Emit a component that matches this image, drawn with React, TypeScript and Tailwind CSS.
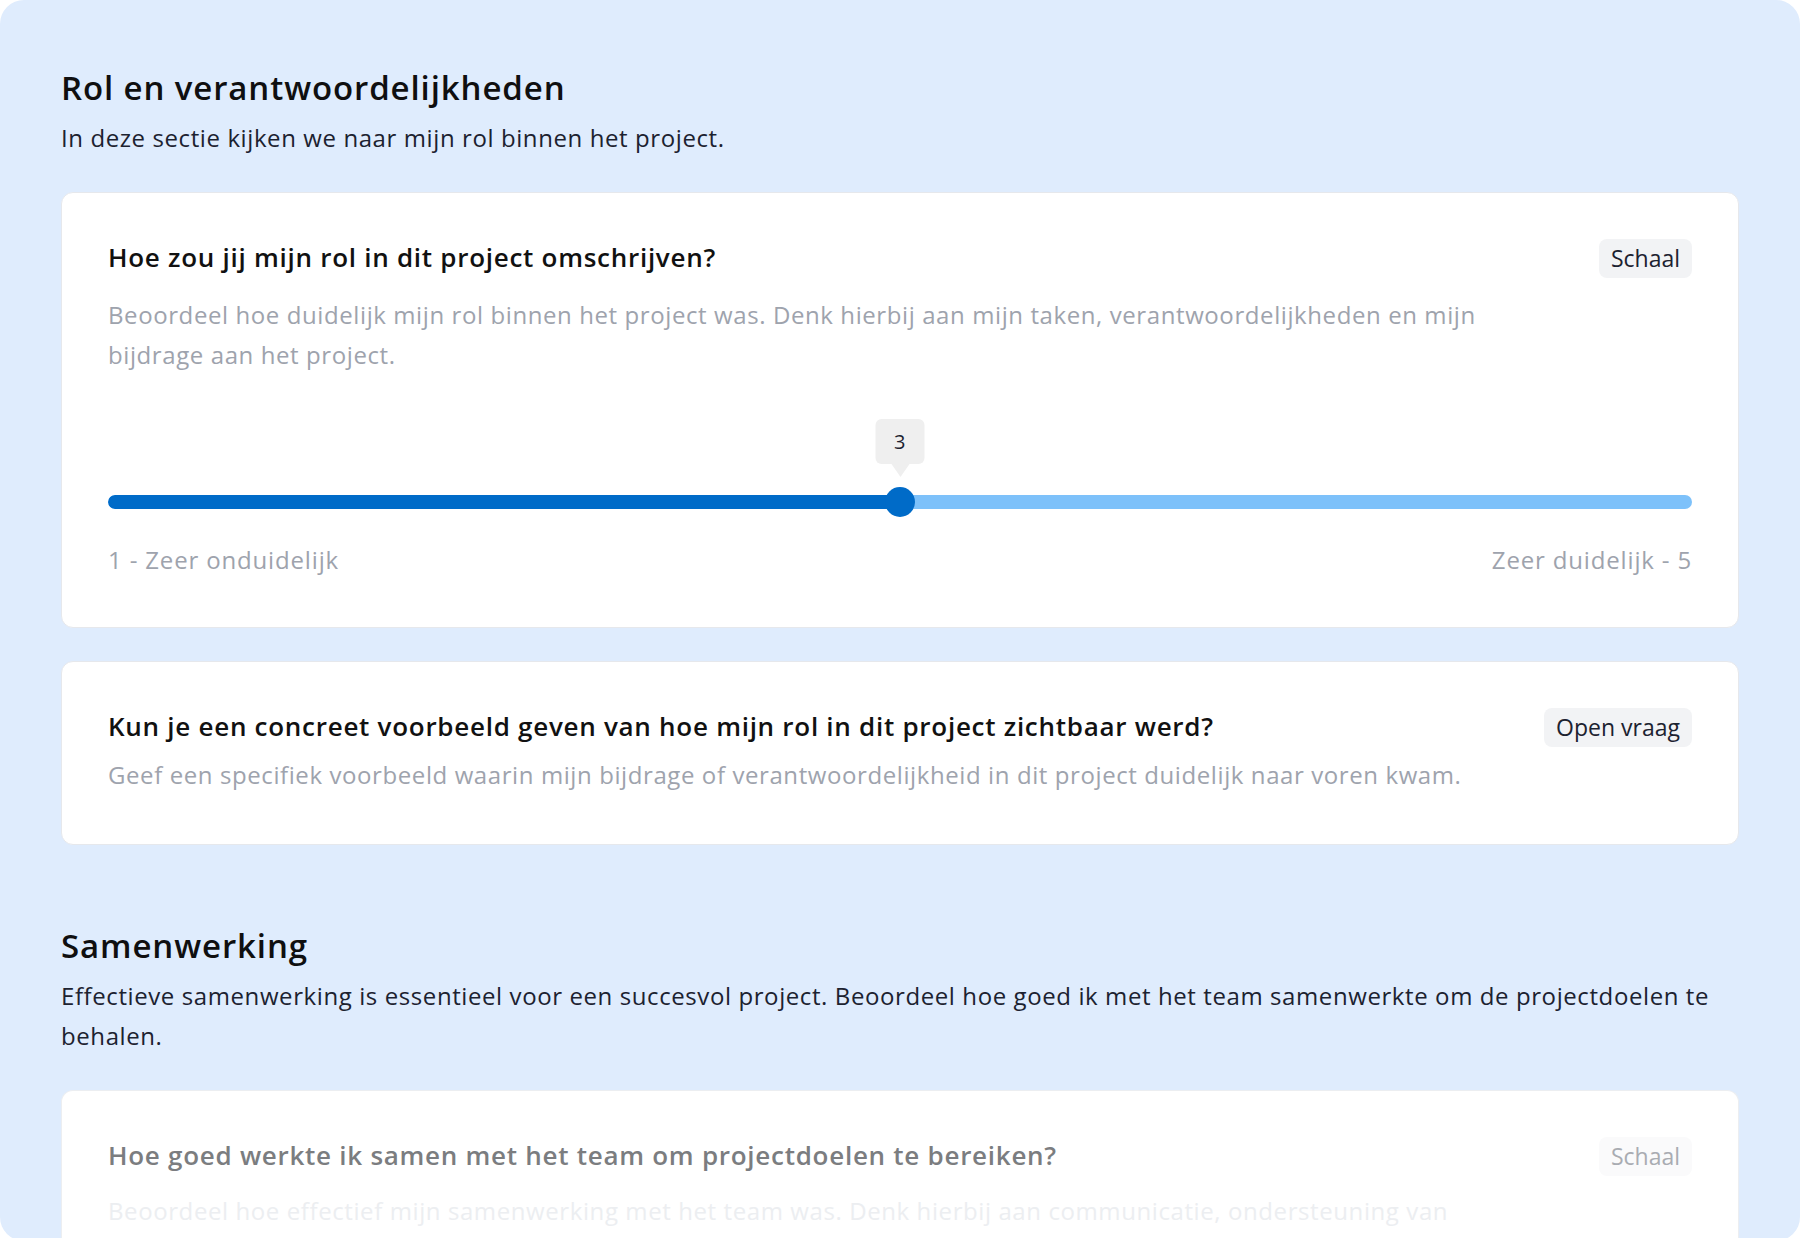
import React from "react";

type Question = {
	title: string;
	description: string;
	type: string;
};

const Badge: React.FC<{ label: string; faded?: boolean }> = ({ label, faded }) => (
	<span
		className={`shrink-0 h-[39px] px-3 flex items-center rounded-lg text-[23px] tracking-normal ${faded ? "bg-[#fafafb] text-[#a9acb2]" : "bg-[#f2f3f5] text-[#1c2230]"}`}
	>
		{label}
	</span>
);

const ScaleSlider: React.FC<{ value: number; min: number; max: number }> = ({
	value,
	min,
	max,
}) => {
	const pct = ((value - min) / (max - min)) * 100;
	return (
		<div className="relative mt-[44px] pt-[76px]">
			<div className="h-[14px] w-full rounded-full bg-[#7dc1fa] overflow-hidden">
				<div className="h-full rounded-full bg-[#006bc8]" style={{ width: pct + "%" }} />
			</div>
			<div
				className="absolute top-0 -translate-x-1/2 flex flex-col items-center"
				style={{ left: pct + "%" }}
			>
				<div className="w-[49px] h-[45px] rounded-md bg-[#efefef] flex items-center justify-center text-[20px] text-[#1c2230]">
					{value}
				</div>
				<div className="w-0 h-0 border-x-[9px] border-x-transparent border-t-[13px] border-t-[#efefef]" />
			</div>
			<div
				className="absolute top-[68px] w-[30px] h-[30px] -translate-x-1/2 rounded-full bg-[#006bc8]"
				style={{ left: pct + "%" }}
			/>
		</div>
	);
};

const titleCls = "pb-[3px] text-[26px] leading-[34px] font-semibold tracking-[0.028em]";

const ScaleCard: React.FC<{ q: Question }> = ({ q }) => (
	<article className="bg-white rounded-xl border border-[#e6e8ec] px-[46px] pt-[46px] pb-[50px]">
		<div className="flex items-center justify-between gap-8">
			<h3 className={`${titleCls} text-[#111111]`}>{q.title}</h3>
			<Badge label={q.type} />
		</div>
		<p className="mt-[17px] max-w-[1400px] text-[24px] leading-[40px] text-[#9ea3ad]">{q.description}</p>
		<ScaleSlider value={3} min={1} max={5} />
		<div className="mt-[34px] flex justify-between text-[24px] leading-[34px] tracking-[0.035em] text-[#9ea3ad]">
			<span>1 - Zeer onduidelijk</span>
			<span>Zeer duidelijk - 5</span>
		</div>
	</article>
);

const OpenCard: React.FC<{ q: Question }> = ({ q }) => (
	<article className="bg-white rounded-xl border border-[#e6e8ec] px-[46px] pt-[46px] pb-[49px]">
		<div className="flex items-center justify-between gap-8">
			<h3 className={`${titleCls} text-[#111111]`}>{q.title}</h3>
			<Badge label={q.type} />
		</div>
		<p className="mt-2 max-w-[1400px] text-[24px] leading-[40px] text-[#9ea3ad]">{q.description}</p>
	</article>
);

const FadedCard: React.FC<{ q: Question }> = ({ q }) => (
	<article className="bg-white rounded-t-xl border border-b-0 border-[#eceef1] px-[46px] pt-[46px] pb-12">
		<div className="flex items-center justify-between gap-8">
			<h3 className={`${titleCls} text-[#7b7d80]`}>{q.title}</h3>
			<Badge label={q.type} faded />
		</div>
		<p className="mt-[15px] max-w-[1400px] text-[24px] leading-[40px] text-[#eceef1]">{q.description}</p>
	</article>
);

const Section: React.FC<{
	title: string;
	intro: string;
	children: React.ReactNode;
	className?: string;
}> = ({ title, intro, children, className }) => (
	<section className={className}>
		<h2 className="text-[33px] leading-[40px] font-semibold tracking-[0.027em] text-[#0f0f10]">{title}</h2>
		<p className="mt-[10px] text-[24px] leading-[40px] text-[#1c2230]">{intro}</p>
		<div className="mt-[34px] flex flex-col gap-[33px]">{children}</div>
	</section>
);

export default function App() {
	return (
		<div className="min-h-screen bg-white tracking-[0.037em] [font-family:'Open_Sans',sans-serif]">
			<main className="h-[1241px] overflow-hidden rounded-3xl bg-[#dfecfd] px-[61px] pt-[68px]">
				<Section
					title="Rol en verantwoordelijkheden"
					intro="In deze sectie kijken we naar mijn rol binnen het project."
				>
					<ScaleCard
						q={{
							title: "Hoe zou jij mijn rol in dit project omschrijven?",
							description:
								"Beoordeel hoe duidelijk mijn rol binnen het project was. Denk hierbij aan mijn taken, verantwoordelijkheden en mijn bijdrage aan het project.",
							type: "Schaal",
						}}
					/>
					<OpenCard
						q={{
							title: "Kun je een concreet voorbeeld geven van hoe mijn rol in dit project zichtbaar werd?",
							description:
								"Geef een specifiek voorbeeld waarin mijn bijdrage of verantwoordelijkheid in dit project duidelijk naar voren kwam.",
							type: "Open vraag",
						}}
					/>
				</Section>
				<Section
					className="mt-[81px]"
					title="Samenwerking"
					intro="Effectieve samenwerking is essentieel voor een succesvol project. Beoordeel hoe goed ik met het team samenwerkte om de projectdoelen te behalen."
				>
					<FadedCard
						q={{
							title: "Hoe goed werkte ik samen met het team om projectdoelen te bereiken?",
							description:
								"Beoordeel hoe effectief mijn samenwerking met het team was. Denk hierbij aan communicatie, ondersteuning van teamleden en het nakomen van afspraken.",
							type: "Schaal",
						}}
					/>
				</Section>
			</main>
		</div>
	);
}
